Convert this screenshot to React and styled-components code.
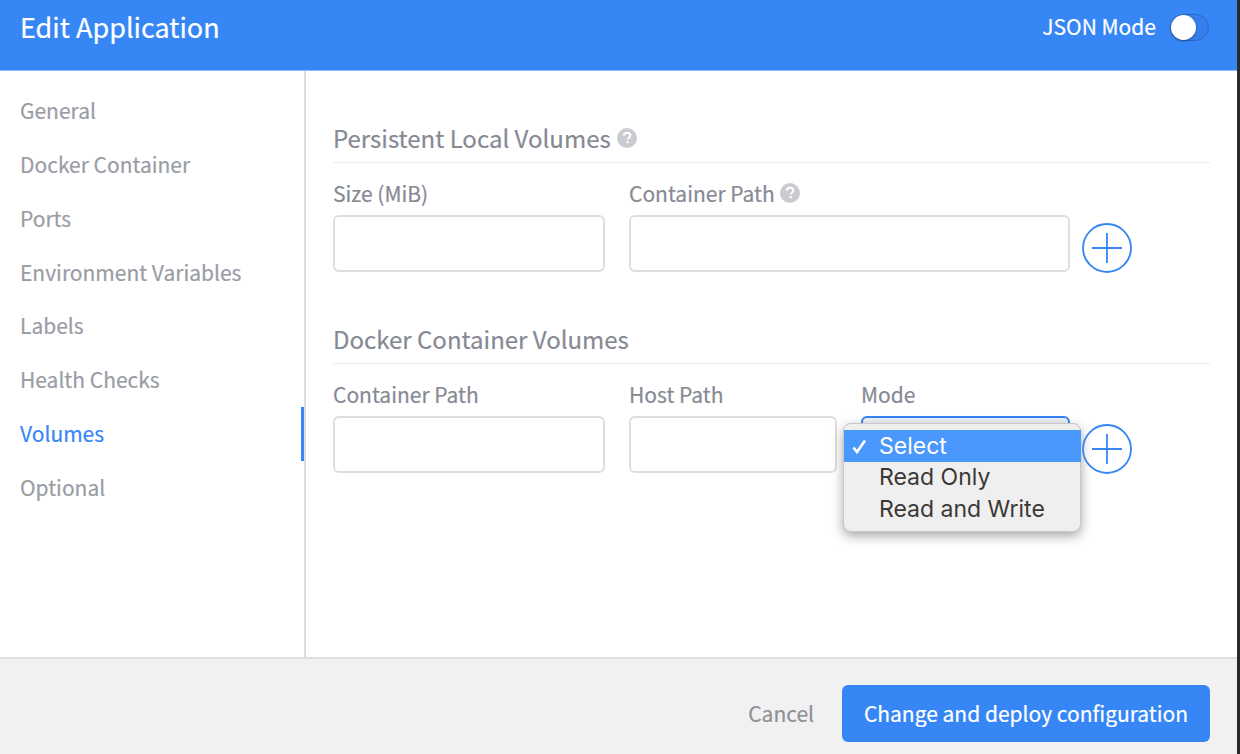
import React from "react";
import styled, { createGlobalStyle } from "styled-components";

const Global = createGlobalStyle`
  html, body { margin: 0; padding: 0; background: #fff; }
  * { box-sizing: border-box; }
`;
const Sans = `"Noto Sans CJK SC", "Noto Sans", sans-serif`;

const Page = styled.div`
  width: 1240px; height: 754px; display: flex; flex-direction: column;
  overflow: hidden; font-family: ${Sans}; background: #fff;
  border-right: 3px solid #2a2a2a;
  -webkit-text-stroke: 0.2px currentColor;
`;
const Header = styled.header`
  height: 71px; flex: none; background: #3686f5; border-bottom: 1px solid #8db9f8; color: #fff;
  display: flex; align-items: flex-start; justify-content: space-between;
  padding: 0 28px 0 20px;
`;
const Title = styled.h1`
  margin: 7px 0 0; font-size: 27px; font-weight: 400; line-height: 40px;
`;
const JsonToggle = styled.div`
  display: flex; align-items: center; gap: 14px; font-size: 21px; line-height: 30px;
  margin-top: 12px;
`;
const JsonLabel = styled.span`position: relative; top: -1px;`;
const Track = styled.div`
  position: relative; width: 39px; height: 27px; border-radius: 14px;
  border: 1px solid #2a68c6; background: #3580ec;
`;
const Knob = styled.div`
  position: absolute; left: 0; top: 0; width: 25px; height: 25px; border-radius: 50%;
  background: #fff; box-shadow: 0 1px 3px rgba(0,0,0,.35);
`;
const Body = styled.div`flex: 1; display: flex; min-height: 0;`;
const Sidebar = styled.nav`
  width: 306px; flex: none; border-right: 2px solid #dcdcdf; padding-top: 13.4px;
`;
const NavItem = styled.div`
  height: 53.75px; display: flex; align-items: center; padding-left: 20px; padding-bottom: 2px;
  font-size: 21px; color: ${p => (p.$active ? "#3686f5" : "#9a9ca5")};
  border-right: 3px solid ${p => (p.$active ? "#3686f5" : "transparent")};
`;
const Main = styled.main`flex: 1; padding: 50px 27px 0 27px; min-width: 0;`;
const Section = styled.section`margin-bottom: 50px;`;
const SectionTitle = styled.div`
  display: flex; align-items: center; gap: 6px; height: 42px; padding-bottom: 8px;
  border-bottom: 1px solid #ececee; font-size: 24px; color: #868994;
`;
const Row = styled.div`display: flex; gap: 24px; margin-top: 13px; align-items: flex-end;`;
const Field = styled.div`position: relative; width: ${p => p.$w}px; flex: none;`;
const FieldLabel = styled.div`
  display: flex; align-items: center; gap: 5px; height: 33px; margin-bottom: 6px;
  font-size: 21px; color: #868994;
`;
const Input = styled.div`
  height: 57px; border: 2px solid #dedee0; border-radius: 6px; background: #fff;
`;
const SelectBox = styled(Input)`border-color: #3686f5; background: #eef1f6;`;
const AddButton = styled.div`
  flex: none; width: 50px; height: 50px; margin-left: -12px; position: relative; top: 1px;
  color: #3686f5; align-self: flex-end;
  svg { display: block; }
`;
const Menu = styled.div`
  position: absolute; left: -18px; top: 46px; width: 238px; height: 109px;
  padding-top: 6px; background: #efefef; border-radius: 8px;
  border: 1px solid #c8c8c8;
  box-shadow: 0 4px 12px rgba(0,0,0,.35);
  font-family: Inter, "Liberation Sans", sans-serif; font-size: 23px; color: #3c3836;
  -webkit-text-stroke: 0;
`;
const MenuItem = styled.div`
  height: 32px; display: flex; align-items: center; padding-left: 35px; position: relative;
  background: ${p => (p.$on ? "#4a98fb" : "transparent")};
  color: ${p => (p.$on ? "#fff" : "#3c3836")};
  width: 237px;
  top: ${p => (p.$on ? "0" : "-1px")};
`;
const CheckMark = styled.svg`
  position: absolute; left: 8px; top: 9px;
`;
const Footer = styled.footer`
  height: 97px; flex: none; background: #f1f1f1; border-top: 2px solid #dedede;
  display: flex; align-items: flex-start; justify-content: flex-end; gap: 28px;
  padding: 26px 27px 0 0;
`;
const Cancel = styled.div`font-size: 21px; color: #8e9098; line-height: 57px;`;
const Primary = styled.div`
  width: 368px; height: 57px; border-radius: 6px; background: #3686f5; color: #fff; padding-bottom: 2px;
  font-size: 21px; white-space: nowrap; display: flex; align-items: center; justify-content: center;
`;

const Help = () => (
  <svg width="20" height="20" viewBox="0 0 20 20" style={{ flex: "none" }}>
    <circle cx="10" cy="10" r="10" fill="#c9cbd1" />
    <path d="M6.8 7.6c.2-1.9 1.5-2.8 3.3-2.8 1.9 0 3.2 1.1 3.2 2.7 0 1.2-.7 1.9-1.6 2.5-.8.5-1 .8-1 1.6" fill="none" stroke="#fff" strokeWidth="2" />
    <rect x="9.5" y="13" width="2.2" height="2.2" fill="#fff" />
  </svg>
);
const Plus = () => (
  <AddButton>
    <svg width="50" height="50" viewBox="0 0 50 50" fill="none" stroke="currentColor" strokeWidth="1.8">
      <circle cx="25" cy="25" r="24" />
      <path d="M25 10v30M10 25h30" />
    </svg>
  </AddButton>
);
const Tick = () => (
  <CheckMark width="15" height="15" viewBox="0 0 15 15" fill="none" stroke="#fff" strokeWidth="2.6">
    <path d="M1.5 8.5 5 13 13 1.5" />
  </CheckMark>
);

const nav = ["General", "Docker Container", "Ports", "Environment Variables", "Labels", "Health Checks", "Volumes", "Optional"];

export default function App() {
  return (
    <Page>
      <Global />
      <Header>
        <Title>Edit Application</Title>
        <JsonToggle><JsonLabel>JSON Mode</JsonLabel><Track><Knob /></Track></JsonToggle>
      </Header>
      <Body>
        <Sidebar>
          {nav.map(n => <NavItem key={n} $active={n === "Volumes"}>{n}</NavItem>)}
        </Sidebar>
        <Main>
          <Section>
            <SectionTitle>Persistent Local Volumes <Help /></SectionTitle>
            <Row>
              <Field $w={272}><FieldLabel>Size (MiB)</FieldLabel><Input /></Field>
              <Field $w={441}><FieldLabel>Container Path <Help /></FieldLabel><Input /></Field>
              <Plus />
            </Row>
          </Section>
          <Section>
            <SectionTitle>Docker Container Volumes</SectionTitle>
            <Row>
              <Field $w={272}><FieldLabel>Container Path</FieldLabel><Input /></Field>
              <Field $w={208}><FieldLabel>Host Path</FieldLabel><Input /></Field>
              <Field $w={209}>
                <FieldLabel>Mode</FieldLabel>
                <SelectBox />
                <Menu>
                  <MenuItem $on><Tick />Select</MenuItem>
                  <MenuItem>Read Only</MenuItem>
                  <MenuItem>Read and Write</MenuItem>
                </Menu>
              </Field>
              <Plus />
            </Row>
          </Section>
        </Main>
      </Body>
      <Footer>
        <Cancel>Cancel</Cancel>
        <Primary>Change and deploy configuration</Primary>
      </Footer>
    </Page>
  );
}
